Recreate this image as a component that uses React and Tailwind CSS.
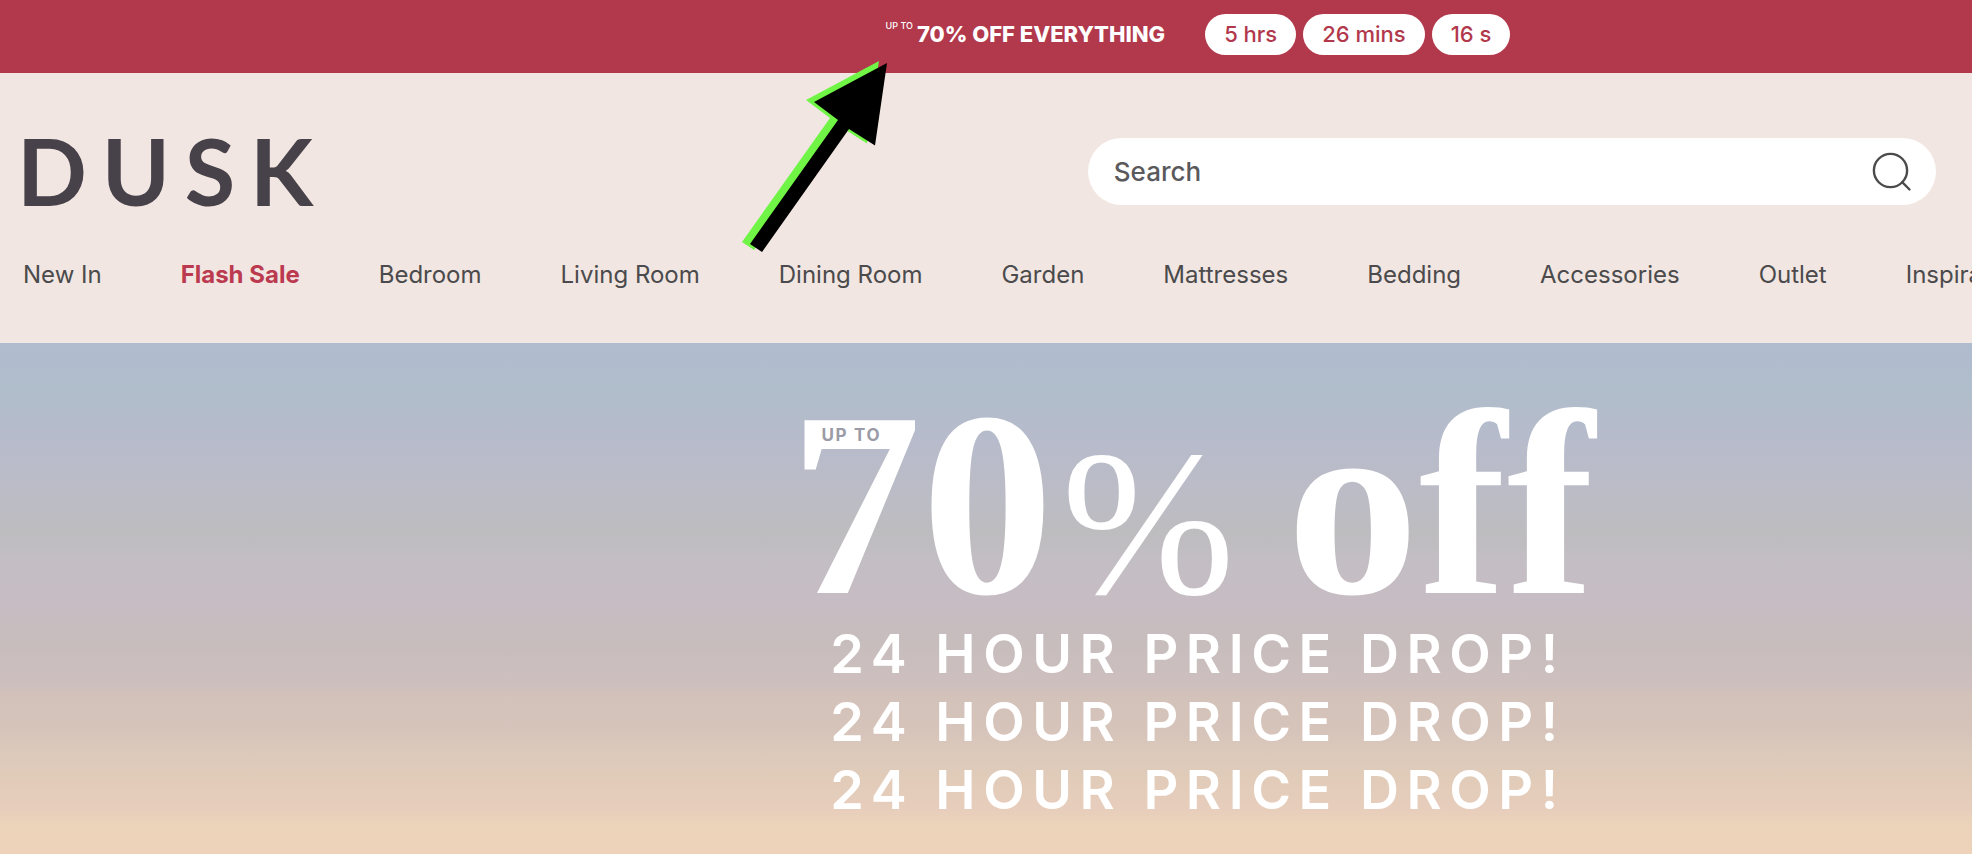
import React from "react";

const navItems = [
  "New In",
  "Flash Sale",
  "Bedroom",
  "Living Room",
  "Dining Room",
  "Garden",
  "Mattresses",
  "Bedding",
  "Accessories",
  "Outlet",
  "Inspiration",
];

const timer = ["5 hrs", "26 mins", "16 s"];

function PromoBar() {
  return (
    <div className="overflow-hidden bg-[#b2384c] text-white">
      <div className="flex h-[73px] w-[121.5%] items-center justify-center pb-1">
        <p className="flex items-center whitespace-nowrap pb-[2px] text-[22px] font-extrabold leading-7">
          <span className="mr-1 self-start text-[9px] font-medium leading-3">UP TO</span>
          70% OFF EVERYTHING
        </p>
        <div className="ml-10 flex gap-[7px]">
          {timer.map((t) => (
            <span
              key={t}
              className="flex h-[41px] items-center rounded-full bg-white px-[19px] text-[22px] font-medium text-[#b2384c]"
            >
              {t}
            </span>
          ))}
        </div>
      </div>
    </div>
  );
}

function SearchBox() {
  return (
    <form
      className="flex h-[67px] w-[44.2%] items-center rounded-full bg-white pl-[26px] pr-6"
      onSubmit={(e) => e.preventDefault()}
    >
      <input
        type="search"
        aria-label="Search"
        placeholder="Search"
        className="min-w-0 flex-1 bg-transparent text-[26px] font-medium text-[#5a595b] outline-none placeholder:text-[#5a595b] placeholder:opacity-100"
      />
      <button type="submit" aria-label="Submit search">
        <svg
          className="h-10 w-10"
          viewBox="0 0 40 40"
          fill="none"
          stroke="#4b4a4c"
          strokeWidth="2.4"
          strokeLinecap="round"
        >
          <circle cx="18.5" cy="18.5" r="16.6" />
          <path d="M30.2 30.2 L37.5 37.5" />
        </svg>
      </button>
    </form>
  );
}

function Arrow() {
  const shape = "M79 204 L67 196 L155 72 L131 54 L204 15 L192 97.5 L166 81 Z";
  return (
    <svg
      aria-hidden="true"
      className="pointer-events-none absolute left-[683px] top-[48px] h-[210px] w-[210px]"
      viewBox="0 0 210 210"
    >
      <path d={shape} fill="#70f547" transform="translate(-8 -2)" />
      <path d={shape} fill="#000" />
    </svg>
  );
}

function Header() {
  return (
    <header className="overflow-hidden bg-[#f1e6e1] pt-[65px] pb-[50px]">
      <div className="flex items-center justify-between pl-[17px] pr-9">
        <a
          href="#"
          className="pb-[2px] font-['Lato'] text-[92px] font-bold leading-[64px] tracking-[0.16em] text-[#47414a]"
        >
          DUSK
        </a>
        <SearchBox />
      </div>
      <nav className="mt-[52px] flex gap-[79px] whitespace-nowrap pl-[23px] text-[24px] leading-9">
        {navItems.map((item) => (
          <a
            key={item}
            href="#"
            className={item === "Flash Sale" ? "font-bold text-[#bb3a50]" : "text-[#4b4a4c]"}
          >
            {item}
          </a>
        ))}
      </nav>
    </header>
  );
}

function Hero() {
  return (
    <main className="flex-1 overflow-hidden bg-[linear-gradient(to_bottom,#b0bccf_0%,#b0bdcb_10%,#b7bbcb_19%,#bcbcc5_31%,#bdbcbf_37%,#c3bec4_43%,#c7bcc3_51%,#c7bdbd_58%,#cdbfbe_67%,#d3c2b9_69%,#d6c4bb_76%,#dbc9bb_80%,#e2ccb9_86%,#e7cdbc_91%,#ebd3ba_94%,#eed2ba_100%)]">
      <div className="flex w-[121.5%] flex-col items-center pt-[64px] text-white">
        <h1 className="relative mr-3 flex items-baseline whitespace-nowrap font-['Liberation_Serif',serif] text-[264px] font-bold leading-[194px]">
          70
          <span className="ml-2 text-[208px] font-normal">%</span>
          <span className="ml-[52px]">off</span>
          <span className="absolute left-[32px] top-[18px] font-['Inter',sans-serif] text-[17px] font-bold leading-5 tracking-widest text-[#9a9ba6]">
            UP TO
          </span>
        </h1>
        <div className="text-center text-[54px] font-semibold leading-[68px] tracking-[0.14em]">
          <p>24 HOUR PRICE DROP!</p>
          <p>24 HOUR PRICE DROP!</p>
          <p>24 HOUR PRICE DROP!</p>
        </div>
      </div>
    </main>
  );
}

export default function App() {
  return (
    <div className="relative flex min-h-screen flex-col overflow-x-hidden font-['Inter',sans-serif]">
      <PromoBar />
      <Header />
      <Hero />
      <Arrow />
    </div>
  );
}
